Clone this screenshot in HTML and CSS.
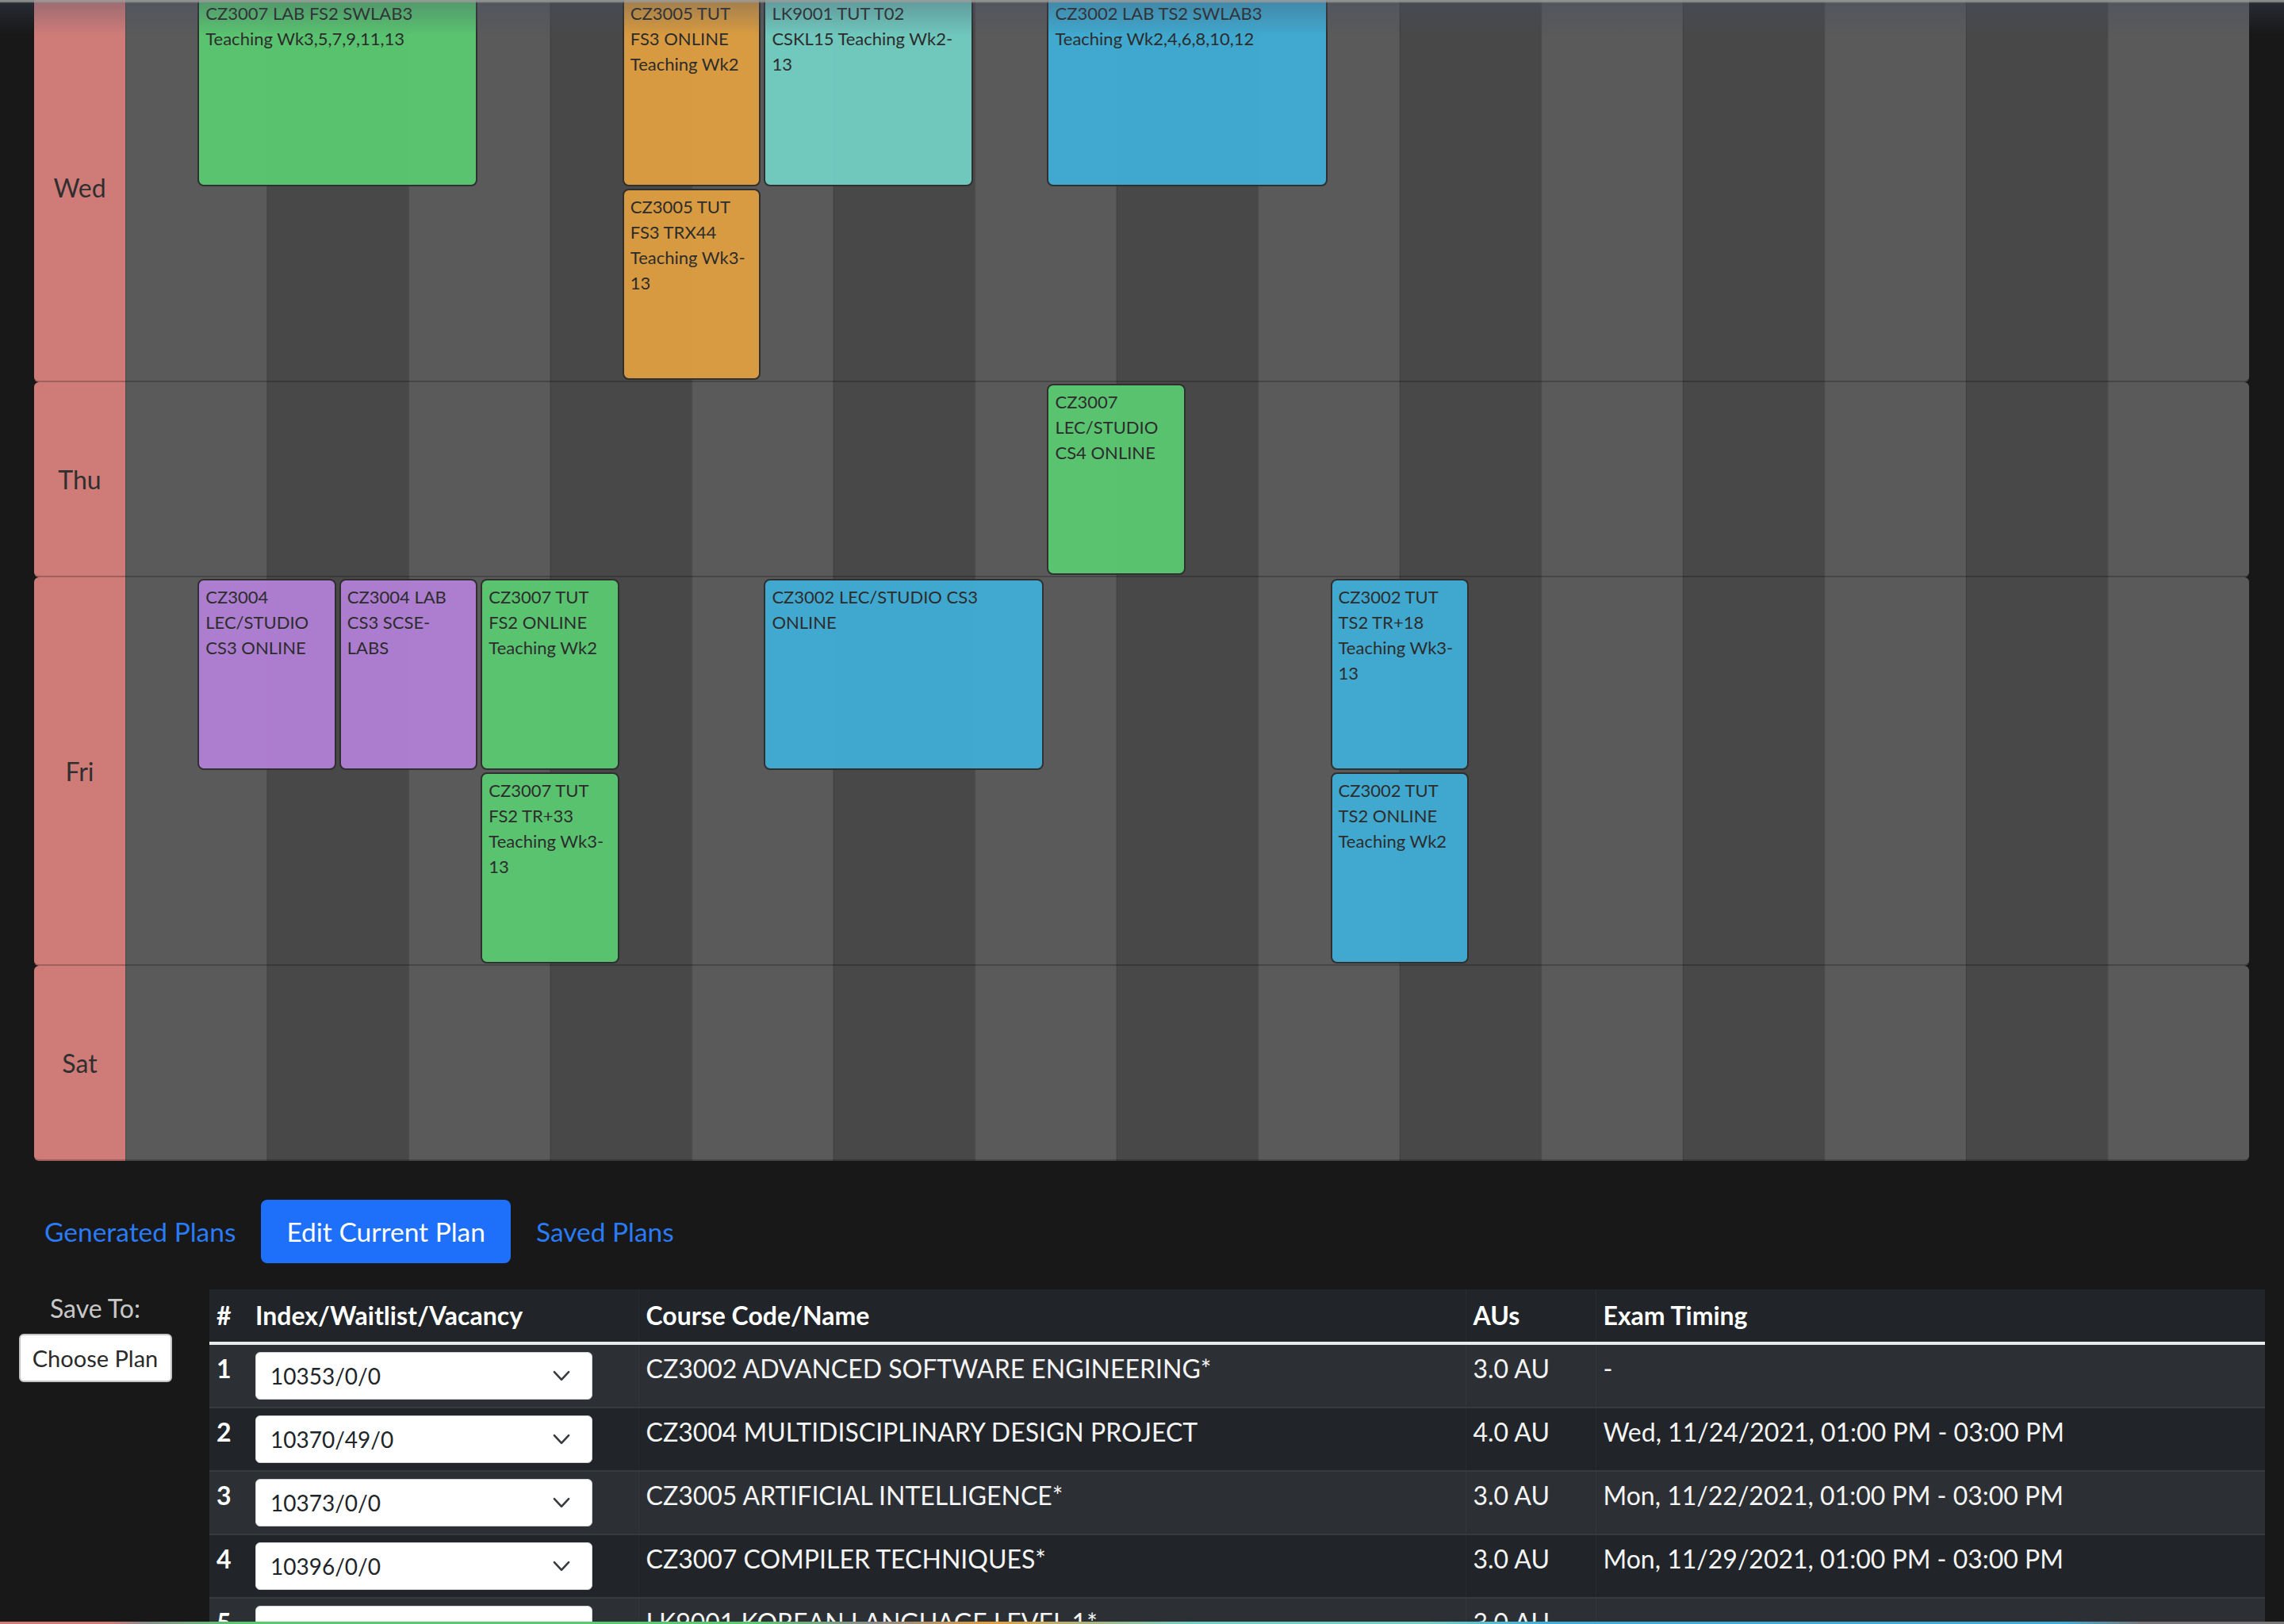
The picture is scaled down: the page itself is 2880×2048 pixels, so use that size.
FILE: index.html
```html
<!DOCTYPE html>
<html lang="en">
<head>
<meta charset="utf-8">
<title>Timetable planner</title>
<link rel="stylesheet" href="styles.css">
</head>
<body>
<div class="topfade"></div>

<section class="calendar">
  <div class="day-row lanes-2 first">
    <div class="day-label">Wed</div>
    <div class="ev green" style="grid-column: 3 / 7; grid-row: 1">CZ3007 LAB FS2 SWLAB3 Teaching Wk3,5,7,9,11,13</div>
    <div class="ev orange" style="grid-column: 9 / 11; grid-row: 1">CZ3005 TUT FS3 ONLINE Teaching Wk2</div>
    <div class="ev teal" style="grid-column: 11 / 14; grid-row: 1">LK9001 TUT T02 CSKL15 Teaching Wk2-13</div>
    <div class="ev blue" style="grid-column: 15 / 19; grid-row: 1">CZ3002 LAB TS2 SWLAB3 Teaching Wk2,4,6,8,10,12</div>
    <div class="ev orange" style="grid-column: 9 / 11; grid-row: 2">CZ3005 TUT FS3 TRX44 Teaching Wk3-13</div>
  </div>
  <div class="day-row lanes-1">
    <div class="day-label">Thu</div>
    <div class="ev green" style="grid-column: 15 / 17; grid-row: 1">CZ3007 LEC/STUDIO CS4 ONLINE</div>
  </div>
  <div class="day-row lanes-2">
    <div class="day-label">Fri</div>
    <div class="ev purple" style="grid-column: 3 / 5; grid-row: 1">CZ3004 LEC/STUDIO CS3 ONLINE</div>
    <div class="ev purple" style="grid-column: 5 / 7; grid-row: 1">CZ3004 LAB CS3 SCSE-LABS</div>
    <div class="ev green" style="grid-column: 7 / 9; grid-row: 1">CZ3007 TUT FS2 ONLINE Teaching Wk2</div>
    <div class="ev blue" style="grid-column: 11 / 15; grid-row: 1">CZ3002 LEC/STUDIO CS3 ONLINE</div>
    <div class="ev blue" style="grid-column: 19 / 21; grid-row: 1">CZ3002 TUT TS2 TR+18 Teaching Wk3-13</div>
    <div class="ev green" style="grid-column: 7 / 9; grid-row: 2">CZ3007 TUT FS2 TR+33 Teaching Wk3-13</div>
    <div class="ev blue" style="grid-column: 19 / 21; grid-row: 2">CZ3002 TUT TS2 ONLINE Teaching Wk2</div>
  </div>
  <div class="day-row lanes-1">
    <div class="day-label">Sat</div>
  </div>
</section>

<nav class="tabs">
  <a class="pill">Generated Plans</a>
  <a class="pill active">Edit Current Plan</a>
  <a class="pill">Saved Plans</a>
</nav>

<section class="plan">
  <div class="save-col">
    <div class="save-label">Save To:</div>
    <button class="choose-btn">Choose Plan</button>
  </div>
  <table class="courses">
    <colgroup>
      <col class="c-num"><col class="c-index"><col class="c-course"><col class="c-au"><col class="c-exam">
    </colgroup>
    <thead>
      <tr><th>#</th><th>Index/Waitlist/Vacancy</th><th class="sep">Course Code/Name</th><th class="sep">AUs</th><th class="sep">Exam Timing</th></tr>
    </thead>
    <tbody>
      <tr>
        <th>1</th>
        <td><div class="sel"><span>10353/0/0</span><svg viewBox="0 0 16 10" class="chev"><path d="M1.5 1.5l6.5 7 6.5-7"/></svg></div></td>
        <td class="sep">CZ3002 ADVANCED SOFTWARE ENGINEERING*</td>
        <td class="sep">3.0 AU</td>
        <td class="sep">-</td>
      </tr>
      <tr>
        <th>2</th>
        <td><div class="sel"><span>10370/49/0</span><svg viewBox="0 0 16 10" class="chev"><path d="M1.5 1.5l6.5 7 6.5-7"/></svg></div></td>
        <td class="sep">CZ3004 MULTIDISCIPLINARY DESIGN PROJECT</td>
        <td class="sep">4.0 AU</td>
        <td class="sep">Wed, 11/24/2021, 01:00 PM - 03:00 PM</td>
      </tr>
      <tr>
        <th>3</th>
        <td><div class="sel"><span>10373/0/0</span><svg viewBox="0 0 16 10" class="chev"><path d="M1.5 1.5l6.5 7 6.5-7"/></svg></div></td>
        <td class="sep">CZ3005 ARTIFICIAL INTELLIGENCE*</td>
        <td class="sep">3.0 AU</td>
        <td class="sep">Mon, 11/22/2021, 01:00 PM - 03:00 PM</td>
      </tr>
      <tr>
        <th>4</th>
        <td><div class="sel"><span>10396/0/0</span><svg viewBox="0 0 16 10" class="chev"><path d="M1.5 1.5l6.5 7 6.5-7"/></svg></div></td>
        <td class="sep">CZ3007 COMPILER TECHNIQUES*</td>
        <td class="sep">3.0 AU</td>
        <td class="sep">Mon, 11/29/2021, 01:00 PM - 03:00 PM</td>
      </tr>
      <tr>
        <th>5</th>
        <td><div class="sel"><span>10379/0/0</span><svg viewBox="0 0 16 10" class="chev"><path d="M1.5 1.5l6.5 7 6.5-7"/></svg></div></td>
        <td class="sep">LK9001 KOREAN LANGUAGE LEVEL 1*</td>
        <td class="sep">3.0 AU</td>
        <td class="sep"></td>
      </tr>
    </tbody>
  </table>
</section>

<div class="bottom-strip"></div>
</body>
</html>
```

FILE: styles.css
```css
html, body {
  margin: 0;
  padding: 0;
  height: 2048px;
  overflow: hidden;
  background: #181818;
  font-family: Lato, "Open Sans", sans-serif;
}

.topfade {
  position: fixed;
  top: 0;
  left: 0;
  right: 0;
  height: 44px;
  z-index: 5;
  pointer-events: none;
  background: linear-gradient(to bottom,
    rgba(150, 150, 150, 0.9) 0,
    rgba(150, 150, 150, 0.9) 2px,
    rgba(70, 80, 100, 0.35) 4px,
    rgba(70, 80, 100, 0) 44px);
}

.bottom-strip {
  position: fixed;
  left: 0;
  right: 0;
  bottom: 0;
  height: 3px;
  z-index: 5;
  background: linear-gradient(to right,
    #cf7c79 0, #cf7c79 140px, #8a8a8a 180px,
    #5ac972 300px, #5ac972 950px, #8a8a8a 1100px,
    #e09f40 1250px, #73cec3 1500px, #73cec3 1800px,
    #40aed6 1950px, #40aed6 2600px, #777 2700px);
}

/* ---------- calendar ---------- */
.calendar {
  margin: 0 44px 0 43px;
}

.day-row {
  display: grid;
  grid-template-columns: 115px repeat(30, minmax(0, 1fr));
  border-bottom: 2px solid rgba(0, 0, 0, 0.22);
  border-radius: 6px;
  background-image:
    linear-gradient(to right, #cf7c79 115px, transparent 115px),
    linear-gradient(to right, rgba(0, 0, 0, 0.14) 1px, transparent 1px),
    linear-gradient(to right, #5a5a5a 50%, #484848 50%);
  background-size:
    100% 100%,
    calc((100% - 115px) / 15) 100%,
    calc((100% - 115px) / 7.5) 100%;
  background-position: 0 0, 115px 0, 115px 0;
  background-repeat: no-repeat, repeat-x, repeat-x;
  background-origin: border-box;
}

.day-row.first {
  margin-top: -8px;
}

.lanes-1 { grid-template-rows: 244px; }
.lanes-2 { grid-template-rows: 244px 244px; }

.day-label {
  grid-column: 1;
  grid-row: 1 / -1;
  align-self: center;
  text-align: center;
  font-size: 32px;
  color: #2f2f2f;
}

.ev {
  margin: 2px 2px 1px 2px;
  border: 2px solid #2e2e2e;
  border-radius: 8px;
  padding: 5px 8px;
  font-size: 22px;
  line-height: 32px;
  color: #2b2b2b;
  opacity: 0.95;
  overflow: hidden;
  min-width: 0;
}

.green  { background: #5ac972; }
.orange { background: #e09f40; }
.teal   { background: #73cec3; }
.blue   { background: #40aed6; }
.purple { background: #b27fd6; }

/* ---------- tabs ---------- */
.tabs {
  display: flex;
  margin: 49px 0 0 24px;
}

.pill {
  display: flex;
  align-items: center;
  height: 80px;
  padding: 0 32px;
  border-radius: 8px;
  font-size: 33.5px;
  color: #2a7bf7;
  cursor: pointer;
}

.pill.active {
  background: #1e6ffa;
  color: #ffffff;
}

/* ---------- plan table ---------- */
.plan {
  display: flex;
  align-items: flex-start;
  margin-top: 33px;
}

.save-col {
  width: 240px;
  flex: none;
  display: flex;
  flex-direction: column;
  align-items: center;
}

.save-label {
  margin-top: 2px;
  font-size: 32px;
  line-height: 44px;
  color: #c8c8c8;
}

.choose-btn {
  margin-top: 10px;
  width: 193px;
  height: 61px;
  box-sizing: border-box;
  background: #ffffff;
  border: 2px solid #c4c4c4;
  border-radius: 6px;
  font-family: Lato, "Open Sans", sans-serif;
  font-size: 29px;
  color: #2a2a2a;
  padding: 0;
}

.courses {
  margin-left: 24px;
  width: 2592px;
  table-layout: fixed;
  border-collapse: collapse;
  color: #ffffff;
}

.c-num    { width: 49px; }
.c-index  { width: 492px; }
.c-course { width: 1043px; }
.c-au     { width: 164px; }
.c-exam   { width: 844px; }

.courses thead th {
  background: #212529;
  text-align: left;
  font-weight: 700;
  font-size: 32px;
  line-height: 44px;
  padding: 11px 9px;
  border-bottom: 4px solid #e8eaec;
}

.courses tbody th,
.courses tbody td {
  text-align: left;
  vertical-align: top;
  font-size: 32px;
  line-height: 42px;
  padding: 9px 9px;
  border-bottom: 2px solid #373b3e;
}

.courses tbody th {
  font-weight: 700;
}

.courses tbody td {
  font-weight: 400;
  color: #f4f4f4;
}

.courses tbody tr:nth-child(odd) { background: #2c3034; }
.courses tbody tr:nth-child(even) { background: #212529; }

.courses .sep {
  border-left: 1px solid rgba(255, 255, 255, 0.035);
}

.sel {
  display: flex;
  align-items: center;
  justify-content: space-between;
  width: 425px;
  height: 60px;
  box-sizing: border-box;
  padding: 0 26px 0 18px;
  background: #ffffff;
  border: 1px solid #ced4da;
  border-radius: 6px;
  font-size: 28px;
  color: #212529;
}

.chev {
  width: 24px;
  height: 14px;
  fill: none;
  stroke: #343a40;
  stroke-width: 1.8;
  stroke-linecap: round;
  stroke-linejoin: round;
}
```
